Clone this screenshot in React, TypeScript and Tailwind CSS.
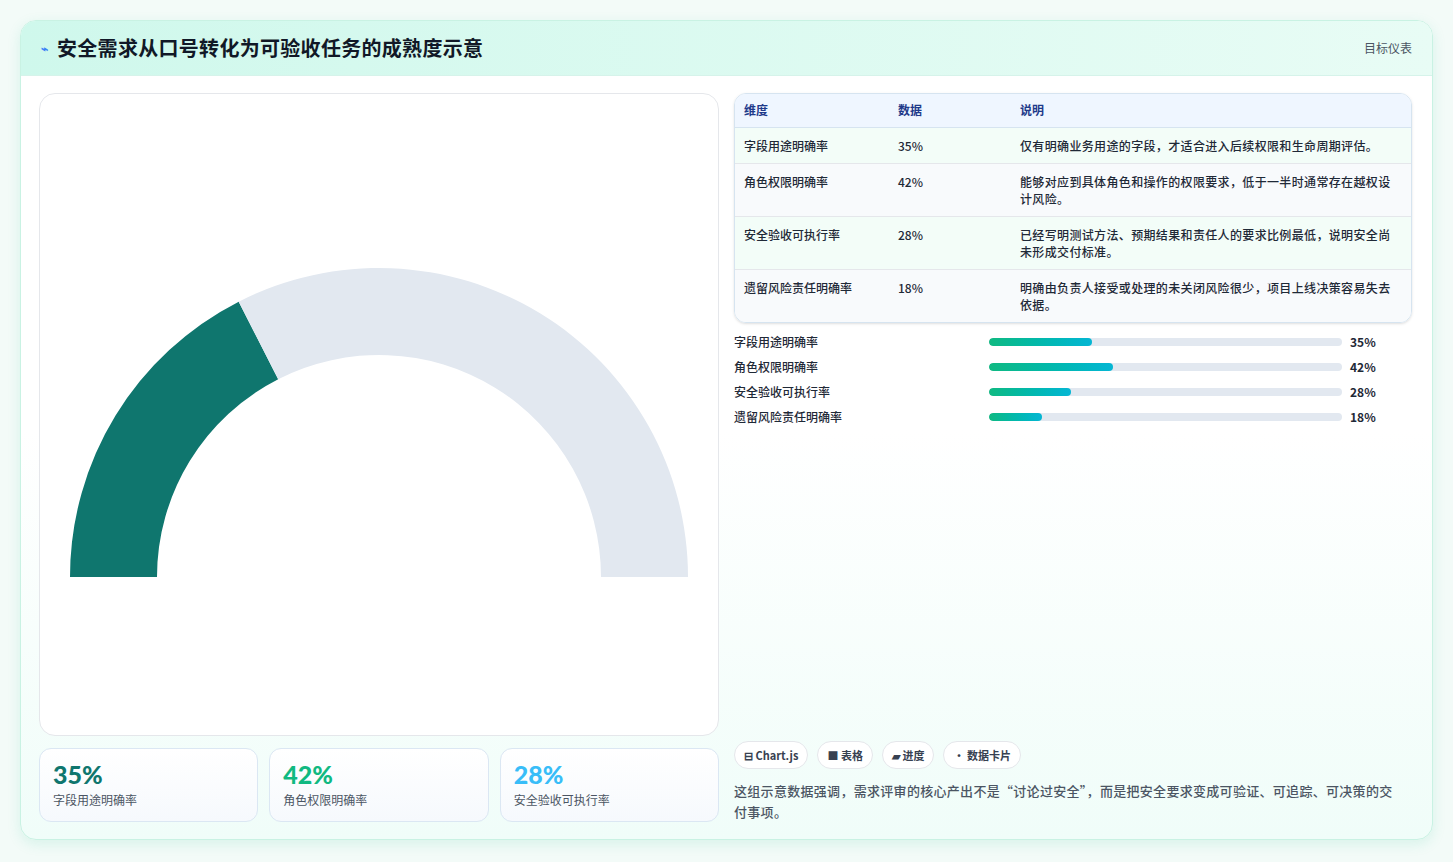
const rows = [
  { name: "字段用途明确率", v: 35, desc: "仅有明确业务用途的字段，才适合进入后续权限和生命周期评估。" },
  { name: "角色权限明确率", v: 42, desc: "能够对应到具体角色和操作的权限要求，低于一半时通常存在越权设计风险。" },
  { name: "安全验收可执行率", v: 28, desc: "已经写明测试方法、预期结果和责任人的要求比例最低，说明安全尚未形成交付标准。" },
  { name: "遗留风险责任明确率", v: 18, desc: "明确由负责人接受或处理的未关闭风险很少，项目上线决策容易失去依据。" },
];

const cards = [
  { v: "35%", label: "字段用途明确率", color: "text-[#0f766e]" },
  { v: "42%", label: "角色权限明确率", color: "text-[#10b981]" },
  { v: "28%", label: "安全验收可执行率", color: "text-[#38bdf8]" },
];

const Gauge = () => (
  <svg width="680" height="643" viewBox="0 0 680 643">
    <path d="M 30 483 A 309 309 0 0 1 198.7 207.7 L 238.2 285.2 A 222 222 0 0 0 117 483 Z" fill="#0f766e" />
    <path d="M 198.7 207.7 A 309 309 0 0 1 648 483 L 561 483 A 222 222 0 0 0 238.2 285.2 Z" fill="#e2e8f0" />
  </svg>
);

export default function App() {
  return (
    <div
      className="w-[1453px] h-[862px] bg-[#f3fbf8] p-5 pb-0"
      style={{ fontFamily: '"Noto Sans CJK SC", "Noto Sans", sans-serif' }}
    >
      <div className="h-[820px] rounded-2xl border border-[#c9f2e3] bg-gradient-to-b from-white via-white to-[#f0fdf9] shadow-[0_4px_14px_rgba(16,185,129,0.12)] overflow-hidden">
        <div className="h-[55px] flex items-center justify-between px-5 bg-gradient-to-r from-[#cff8ec] to-[#e8fcf5] border-b border-[#d6f3ea]">
          <div className="flex items-center gap-[9px]">
            <span className="text-[#3b82f6] text-[12px] font-bold">⌁</span>
            <h1 className="text-[20px] font-bold text-[#111827] tracking-[0.3px]">安全需求从口号转化为可验收任务的成熟度示意</h1>
          </div>
          <span className="text-[12px] text-[#4b5563]">目标仪表</span>
        </div>
        <div className="flex gap-[15px] pl-[18px] pr-5 pt-[17px]">
          <div className="w-[680px] flex flex-col">
            <div className="h-[643px] rounded-2xl border border-[#e5e7eb] bg-white overflow-hidden">
              <Gauge />
            </div>
            <div className="flex gap-[11px] mt-[12px]">
              {cards.map((c) => (
                <div key={c.v} className="flex-1 h-[74px] rounded-xl border border-[#dbe7f3] bg-gradient-to-b from-white to-[#f6f9fd] px-[13px] pt-[10px]">
                  <div className={`text-[25px] font-black leading-[30px] ${c.color}`} style={{ fontFamily: "Lato, sans-serif" }}>{c.v}</div>
                  <div className="text-[12px] text-[#4b5563] mt-[2px]">{c.label}</div>
                </div>
              ))}
            </div>
          </div>
          <div className="flex-1 flex flex-col">
            <div className="rounded-xl border border-[#d6e4f0] overflow-hidden shadow-sm">
              <table className="w-full text-[12px] font-medium text-[#1f2937] border-collapse">
                <thead>
                  <tr className="bg-[#eff6ff] text-[#1e3a8a] font-bold h-[33px] border-b border-[#d6e4f0]">
                    <td className="pl-[9px] w-[163px]">维度</td>
                    <td className="w-[122px]">数据</td>
                    <td>说明</td>
                  </tr>
                </thead>
                <tbody>
                  {rows.map((r, i) => (
                    <tr key={r.name} className={`align-top border-t border-[#e5e7eb] ${i % 2 ? "bg-[#f8fafc]" : "bg-[#f3fdf8]"}`}>
                      <td className="pl-[9px] py-[9px] leading-[17px]">{r.name}</td>
                      <td className="py-[9px] leading-[17px]">{r.v}%</td>
                      <td className="py-[9px] pr-[10px] leading-[17px] tracking-[0.35px]">{r.desc}</td>
                    </tr>
                  ))}
                </tbody>
              </table>
            </div>
            <div className="mt-[10px] flex flex-col gap-[7px]">
              {rows.map((r) => (
                <div key={r.name} className="flex items-center h-[18px] text-[12px] font-medium text-[#1f2937]">
                  <span className="w-[255px]">{r.name}</span>
                  <div className="w-[353px] h-2 rounded-full bg-[#e2e8f0] overflow-hidden">
                    <div className="h-full rounded-full bg-gradient-to-r from-[#10b981] to-[#06b6d4]" style={{ width: `${r.v * (353 / 120)}px` }} />
                  </div>
                  <span className="ml-2 font-bold">{r.v}%</span>
                </div>
              ))}
            </div>
            <div className="mt-auto flex gap-[9px]">
              {["⊟ Chart.js", "■ 表格", "▰ 进度", "• 数据卡片"].map((t) => (
                <span key={t} className="h-[28px] px-[9px] rounded-full border border-[#e5e7eb] bg-white text-[11px] font-semibold text-[#374151] flex items-center">{t}</span>
              ))}
            </div>
            <p className="mt-[11px] text-[13px] font-medium leading-[21px] text-[#4b5563] pr-3 tracking-[0.3px]">
              这组示意数据强调，需求评审的核心产出不是“讨论过安全”，而是把安全要求变成可验证、可追踪、可决策的交付事项。
            </p>
          </div>
        </div>
      </div>
    </div>
  );
}
